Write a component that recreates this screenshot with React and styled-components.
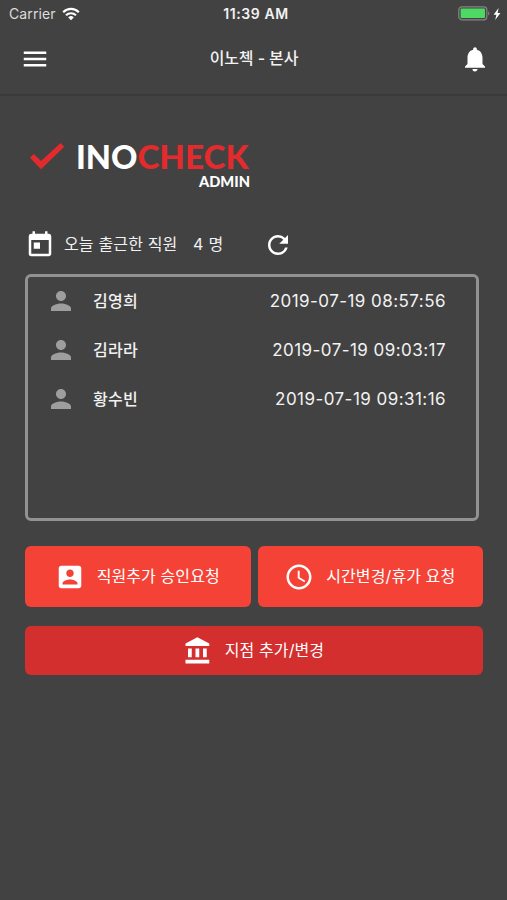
import styled, { createGlobalStyle } from "styled-components"
import {
  MdAccessTime,
  MdMenu,
  MdNotifications,
  MdPerson,
  MdRefresh,
  MdToday,
} from "react-icons/md"

const GlobalStyle = createGlobalStyle`
  * {
    box-sizing: border-box;
  }

  body {
    margin: 0;
    background: #424242;
    font-family: Inter, "Noto Sans CJK KR", sans-serif;
  }

  svg {
    display: block;
    flex: none;
  }
`

const Screen = styled.div`
  height: 900px;
  overflow: hidden;
  background: #424242;
  color: #f2f2f2;
`

const StatusBar = styled.div`
  display: grid;
  grid-template-columns: 1fr auto 1fr;
  align-items: center;
  height: 27px;
  padding: 0 6px 0 9px;
`

const Carrier = styled.div`
  display: flex;
  align-items: center;
  gap: 6px;
  font-size: 14px;
  letter-spacing: 0.1px;
  color: #dcdcdc;
`

const Clock = styled.div`
  padding-left: 2px;
  font-size: 14px;
  font-weight: 600;
  letter-spacing: 0.6px;
`

const Power = styled.div`
  display: flex;
  justify-content: flex-end;
  align-items: center;
  gap: 3px;
`

const AppBar = styled.header`
  display: flex;
  justify-content: space-between;
  align-items: center;
  height: 69px;
  padding: 0 17px 3px 20px;
  border-bottom: 2px solid #3b3b3b;
`

const IconButton = styled.button`
  padding: 0;
  border: none;
  background: none;
  color: #fff;
  cursor: pointer;
`

const Title = styled.h1`
  margin: 0;
  padding: 0 2px 4px 0;
  font-size: 16px;
  font-weight: 500;
  letter-spacing: -0.1px;
`

const Content = styled.main`
  padding: 40px 24px 0 25px;
`

const Summary = styled.div`
  display: flex;
  align-items: center;
  height: 30px;
  margin-top: 38px;
  font-size: 16px;
`

const SummaryLabel = styled.span`
  width: 129px;
  margin-left: 9px;
  padding-bottom: 4px;
  letter-spacing: 0.15px;
`

const SummaryCount = styled.span`
  width: 70px;
  padding-bottom: 4px;
  letter-spacing: 0.3px;
`

const Attendance = styled.ul`
  height: 247px;
  margin: 14px 4px 25px 0;
  padding: 0;
  border: 3px solid #929292;
  border-radius: 6px;
  list-style: none;
`

const Employee = styled.li`
  display: flex;
  align-items: center;
  height: 49px;
  padding: 0 30px 1px 18px;
  color: #9e9e9e;
`

const Name = styled.span`
  flex: 1;
  margin-left: 17px;
  padding-bottom: 3px;
  font-size: 16px;
  font-weight: 500;
  letter-spacing: 0.3px;
  color: #f2f2f2;
`

const Time = styled.span`
  font-size: 17px;
  letter-spacing: 0.45px;
  color: #f2f2f2;
`

const Actions = styled.div`
  display: grid;
  grid-template-columns: 1fr 1fr;
  gap: 19px 7px;
`

const ActionButton = styled.button`
  display: flex;
  justify-content: center;
  align-items: center;
  gap: 12px;
  height: ${(props) => (props.$wide ? "49px" : "61px")};
  grid-column: ${(props) => (props.$wide ? "1 / -1" : "auto")};
  padding: 0 1px 0 0;
  border: none;
  border-radius: 6px;
  background: ${(props) => (props.$wide ? "#d32f2f" : "#f44336")};
  color: #fff;
  font-family: inherit;
  font-size: 16px;
  letter-spacing: 0.1px;
  cursor: pointer;

  span {
    padding-bottom: 4px;
  }
`

const employees = [
  { name: "김영희", time: "2019-07-19 08:57:56" },
  { name: "김라라", time: "2019-07-19 09:03:17" },
  { name: "황수빈", time: "2019-07-19 09:31:16" },
]

const WifiIcon = () => (
  <svg width="18" height="14" viewBox="0 0 18 14" fill="none" stroke="#fff">
    <path d="M1.2 5.2a11 11 0 0 1 15.6 0" strokeWidth="2.2" />
    <path d="M4 8.3a7 7 0 0 1 10 0" strokeWidth="2.1" />
    <path d="M9 13.2 6.2 10.4a4 4 0 0 1 5.6 0z" fill="#fff" stroke="none" />
  </svg>
)

const BatteryIcon = () => (
  <svg width="32" height="15" viewBox="0 0 32 15">
    <rect x="0.8" y="0.8" width="28" height="13" rx="3" fill="none" stroke="#858585" strokeWidth="1.2" />
    <rect x="2.6" y="2.6" width="24.4" height="9.4" rx="1" fill="#4cd964" />
    <path d="M30.2 5.2c1.6.7 1.6 3.6 0 4.3z" fill="#858585" />
  </svg>
)

const BoltIcon = () => (
  <svg width="8" height="12" viewBox="0 0 8 12">
    <path d="M5.6 0 0.6 6.7h2.8L2.2 12 7.4 5H4.6z" fill="#fff" />
  </svg>
)

const AccountBoxIcon = () => (
  <svg width="30" height="30" viewBox="0 0 24 24" fill="currentColor">
    <path d="M3 5v14c0 1.1.89 2 2 2h14c1.1 0 2-.9 2-2V5c0-1.1-.9-2-2-2H5c-1.11 0-2 .9-2 2zm12 4c0 1.66-1.34 3-3 3s-3-1.34-3-3 1.34-3 3-3 3 1.34 3 3zm-9 8c0-2 4-3.1 6-3.1s6 1.1 6 3.1v1H6v-1z" />
  </svg>
)

const BankIcon = () => (
  <svg width="30" height="30" viewBox="0 0 24 24" fill="currentColor">
    <path d="M4 10v7h3v-7H4zm6 0v7h3v-7h-3zM2 22h19v-3H2v3zm14-12v7h3v-7h-3zm-4.5-9L2 6v2h19V6l-9.5-5z" />
  </svg>
)

const Logo = () => (
  <svg width="230" height="56" viewBox="25 136 230 56" fontFamily="Lato, sans-serif" fontWeight="900">
    <path d="M30 157.7 33.8 154 41 161 60.7 143 64.2 146.7 41 169.3z" fill="#e32b2d" />
    <text x="76" y="169" fontSize="33" fill="#fff" textLength="61.5" lengthAdjust="spacingAndGlyphs">
      INO
    </text>
    <text x="137.5" y="169" fontSize="33" fill="#e32b2d" textLength="111" lengthAdjust="spacingAndGlyphs">
      CHECK
    </text>
    <text x="199" y="187.3" fontSize="15.5" fill="#fff" textLength="51" lengthAdjust="spacingAndGlyphs">
      ADMIN
    </text>
  </svg>
)

const App = () => {
  return (
    <Screen>
      <GlobalStyle />
      <StatusBar>
        <Carrier>
          Carrier <WifiIcon />
        </Carrier>
        <Clock>11:39 AM</Clock>
        <Power>
          <BatteryIcon />
          <BoltIcon />
        </Power>
      </StatusBar>

      <AppBar>
        <IconButton aria-label="menu">
          <MdMenu size={30} />
        </IconButton>
        <Title>이노첵 - 본사</Title>
        <IconButton aria-label="notifications">
          <MdNotifications size={30} />
        </IconButton>
      </AppBar>

      <Content>
        <Logo />
        <Summary>
          <MdToday size={30} color="#fff" />
          <SummaryLabel>오늘 출근한 직원</SummaryLabel>
          <SummaryCount>4 명</SummaryCount>
          <IconButton aria-label="refresh">
            <MdRefresh size={30} />
          </IconButton>
        </Summary>

        <Attendance>
          {employees.map((e) => (
            <Employee key={e.name}>
              <MdPerson size={30} />
              <Name>{e.name}</Name>
              <Time>{e.time}</Time>
            </Employee>
          ))}
        </Attendance>

        <Actions>
          <ActionButton>
            <AccountBoxIcon />
            <span>직원추가 승인요청</span>
          </ActionButton>
          <ActionButton>
            <MdAccessTime size={30} />
            <span>시간변경/휴가 요청</span>
          </ActionButton>
          <ActionButton $wide>
            <BankIcon />
            <span>지점 추가/변경</span>
          </ActionButton>
        </Actions>
      </Content>
    </Screen>
  )
}

export default App
